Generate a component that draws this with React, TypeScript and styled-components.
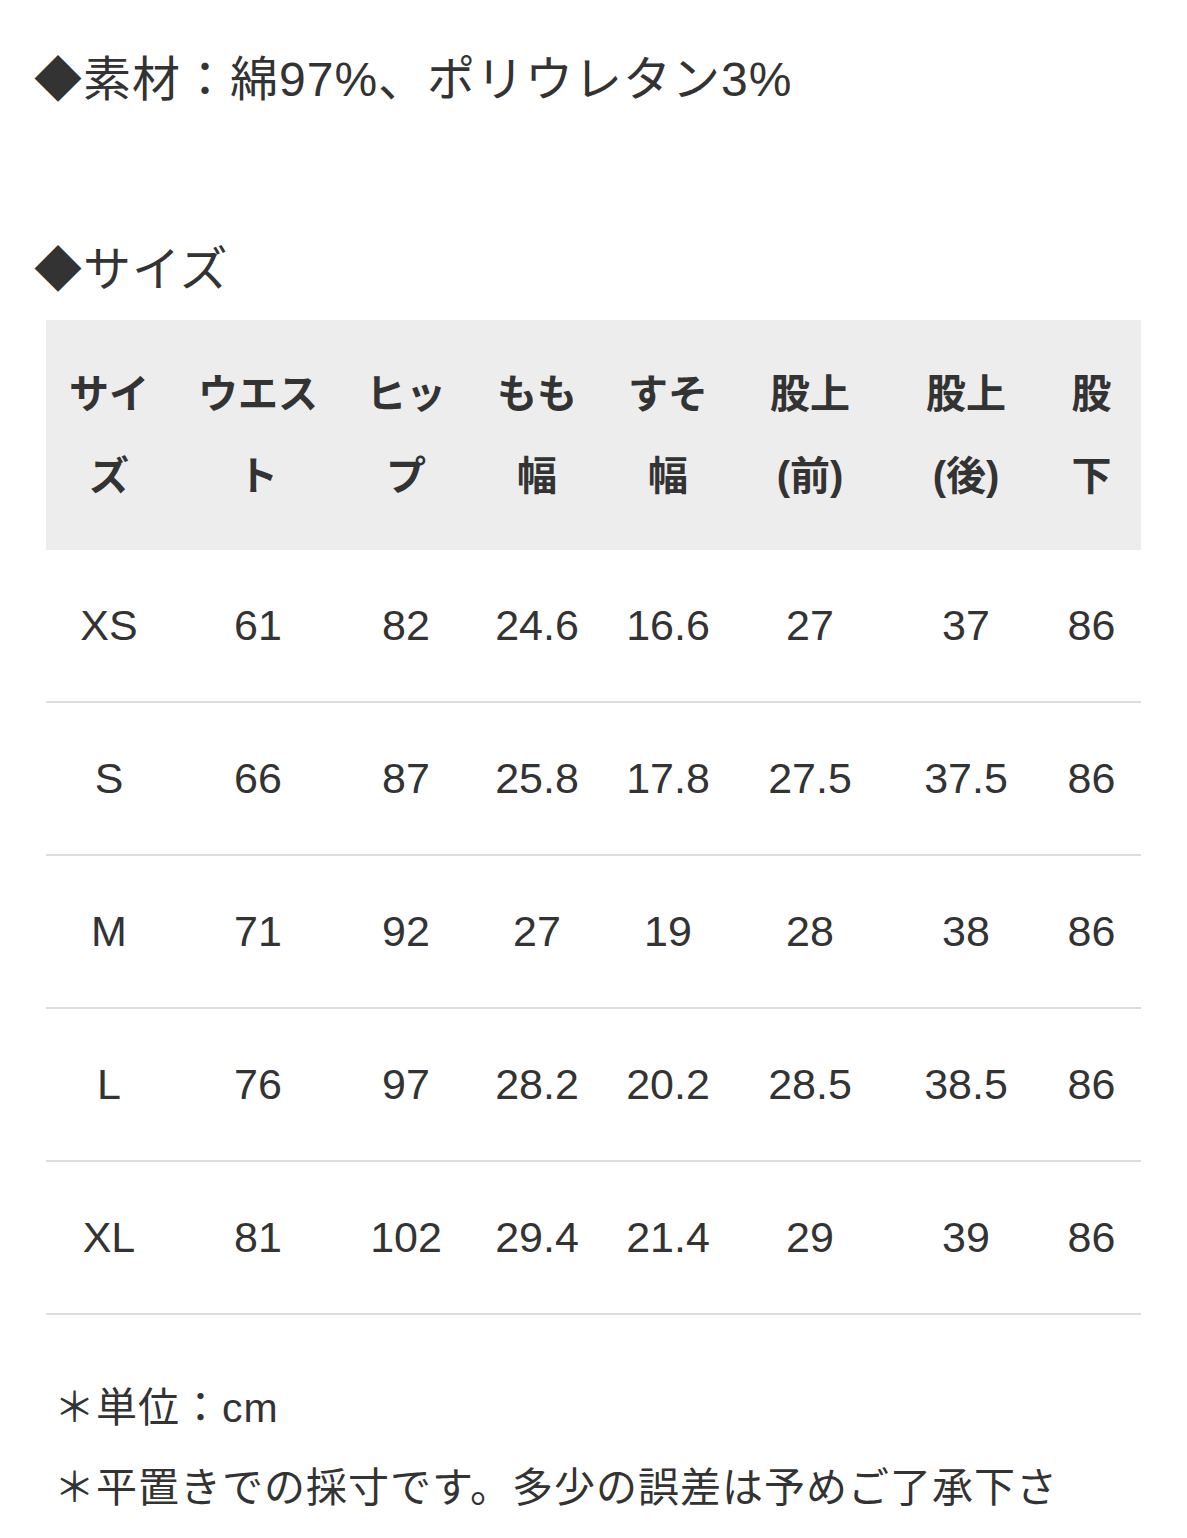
import styled, { createGlobalStyle } from 'styled-components';

const Global = createGlobalStyle`
  body {
    margin: 0;
    background: #fff;
  }
`;

const Page = styled.div`
  width: 1187px;
  padding: 40px 46px 0 34px;
  box-sizing: border-box;
  font-family: 'Liberation Sans', 'Noto Sans CJK JP', sans-serif;
  color: #333;
`;

const Heading = styled.p<{ $gap?: number }>`
  margin: ${(p) => p.$gap ?? 0}px 0 0;
  font-size: 48px;
  line-height: 80px;
  letter-spacing: 1px;
`;

const Table = styled.table`
  margin: 10px 0 0 12px;
  width: 1095px;
  border-collapse: collapse;
  table-layout: fixed;
`;

const HeadCell = styled.th`
  background: #ededed;
  font-size: 40px;
  font-weight: 700;
  line-height: 82px;
  padding: 33px 0;
  text-align: center;
  white-space: nowrap;
`;

const Row = styled.tr`
  border-bottom: 2px solid #dddddd;
`;

const Cell = styled.td`
  height: 151px;
  padding: 0;
  font-size: 43px;
  text-align: center;
  vertical-align: middle;
`;

const Notes = styled.div`
  margin: 53px 0 0 20px;
  width: 1030px;
  font-size: 41px;
  line-height: 80px;
  letter-spacing: 1px;
`;

const columns: { label: [string, string]; width: number }[] = [
  { label: ['サイ', 'ズ'], width: 126 },
  { label: ['ウエス', 'ト'], width: 172 },
  { label: ['ヒッ', 'プ'], width: 124 },
  { label: ['もも', '幅'], width: 138 },
  { label: ['すそ', '幅'], width: 124 },
  { label: ['股上', '(前)'], width: 160 },
  { label: ['股上', '(後)'], width: 152 },
  { label: ['股', '下'], width: 99 },
];

const rows = [
  ['XS', '61', '82', '24.6', '16.6', '27', '37', '86'],
  ['S', '66', '87', '25.8', '17.8', '27.5', '37.5', '86'],
  ['M', '71', '92', '27', '19', '28', '38', '86'],
  ['L', '76', '97', '28.2', '20.2', '28.5', '38.5', '86'],
  ['XL', '81', '102', '29.4', '21.4', '29', '39', '86'],
];

export default function App() {
  return (
    <Page>
      <Global />
      <Heading>◆素材：綿97%、ポリウレタン3%</Heading>
      <Heading $gap={110}>◆サイズ</Heading>
      <Table>
        <colgroup>
          {columns.map((c, i) => (
            <col key={i} style={{ width: c.width }} />
          ))}
        </colgroup>
        <thead>
          <tr>
            {columns.map((c, i) => (
              <HeadCell key={i}>
                {c.label[0]}
                <br />
                {c.label[1]}
              </HeadCell>
            ))}
          </tr>
        </thead>
        <tbody>
          {rows.map((r) => (
            <Row key={r[0]}>
              {r.map((v, i) => (
                <Cell key={i}>{v}</Cell>
              ))}
            </Row>
          ))}
        </tbody>
      </Table>
      <Notes>
        <div>＊単位：cm</div>
        <div>＊平置きでの採寸です。多少の誤差は予めご了承下さい。</div>
      </Notes>
    </Page>
  );
}
